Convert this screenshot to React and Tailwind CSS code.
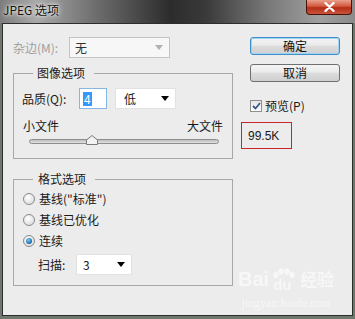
import React from 'react';

const font = { fontFamily: '"Noto Sans CJK SC", "Noto Sans", sans-serif' };

const Arrow = ({ color = '#000' }) => (
  <svg width="8" height="5" viewBox="0 0 8 5">
    <path d="M0 0h8L4 5z" fill={color} />
  </svg>
);

const Radio = ({ checked }) => (
  <span className="w-[12px] h-[12px] rounded-full border border-[#8a8a8a] bg-[radial-gradient(circle_at_40%_35%,#ffffff,#d4d4d4)] flex items-center justify-center">
    {checked && (
      <span className="w-[6px] h-[6px] rounded-full bg-[radial-gradient(circle_at_40%_35%,#7fd0f5,#1466a8_70%,#0b3d6b)]" />
    )}
  </span>
);

const Button = ({ children, focused }) => (
  <div
    className={`w-[90px] h-[18px] rounded-[3px] border flex items-center justify-center text-[12px] leading-none text-[#111] bg-[linear-gradient(#f4f4f4_0%,#ebebeb_45%,#dddddd_50%,#cfcfcf_100%)] ${
      focused ? 'border-[#3c8fc8] shadow-[inset_0_0_0_1px_#9fd3f3]' : 'border-[#707070]'
    }`}
  >
    {children}
  </div>
);

export default function App() {
  return (
    <div className="w-[355px] h-[319px] bg-[#6e786c] overflow-hidden relative" style={font}>
      {/* title bar */}
      <div className="h-[23px] flex items-start bg-[linear-gradient(90deg,#7c7c7c_0%,#a8a8a8_10%,#6a6a6a_28%,#2c2c2c_48%,#3a3a3a_58%,#777_75%,#a0a0a0_90%,#8a8a8a_100%)]">
        <div className="pl-[3px] pt-[2px] text-[12px] leading-[16px] text-[#111] [text-shadow:0_0_6px_#ffffff,0_0_3px_#ffffff]">
          JPEG 选项
        </div>
        <div className="ml-auto mr-[3px] w-[46px] h-[15px] rounded-b-[4px] border border-t-0 border-[#4a1208] bg-[linear-gradient(#e9a08c_0%,#d2583f_45%,#b52d16_55%,#c8553c_100%)] flex items-center justify-center">
          <svg width="11" height="10" viewBox="0 0 11 10">
            <path d="M1.5 1l8 8M9.5 1l-8 8" stroke="#fff" strokeWidth="2.4" strokeLinecap="round" />
          </svg>
        </div>
      </div>

      {/* client area */}
      <div className="mx-[2px] w-[351px] h-[293px] bg-[#ececec] border border-[#2d2d2d] flex text-[12px] leading-[16px] text-[#1a1a1a]">
        {/* left column */}
        <div className="w-[230px] pl-[10px] flex flex-col">
          <div className="mt-[13px] h-[21px] flex items-center">
            <span className="w-[56px] text-[#a0a0a0]">杂边(M):</span>
            <div className="w-[101px] h-[21px] border border-[#c4c4c4] bg-[#f7f7f7] flex items-center pl-[5px] pr-[6px]">
              <span className="text-[#333]">无</span>
              <span className="ml-auto"><Arrow color="#b0b0b0" /></span>
            </div>
          </div>

          <fieldset className="mt-[7px] w-[220px] border border-[#a8a8a8] pb-[14px]">
            <legend className="ml-[19px] pl-[4px] pr-[9px] text-[12px] leading-[16px]">图像选项</legend>
            <div className="mt-[7px] h-[21px] flex items-center pl-[8px]">
              <span className="w-[57px]">品质(Q):</span>
              <div className="w-[28px] h-[21px] border border-[#86b6e4] bg-white flex items-center pl-[3px]">
                <span className="bg-[#3399ff] text-white px-[1px] leading-[14px]">4</span>
              </div>
              <div className="ml-[8px] w-[61px] h-[21px] border border-[#e2e2e2] bg-white flex items-center pl-[8px] pr-[6px]">
                <span>低</span>
                <span className="ml-auto"><Arrow /></span>
              </div>
            </div>
            <div className="mt-[9px] flex pl-[9px] pr-[9px]">
              <span>小文件</span>
              <span className="ml-auto">大文件</span>
            </div>
            <div className="mt-[5px] ml-[15px] w-[190px] h-[5px] rounded-full border border-[#8e8e8e] bg-[linear-gradient(#bdbdbd,#e2e2e2)] relative">
              <svg className="absolute left-[56px] top-[-5px]" width="12" height="10" viewBox="0 0 12 10">
                <path d="M0.5 9.5V5L6 0.5L11.5 5V9.5Z" fill="#f2f2f2" stroke="#7a7a7a" />
              </svg>
            </div>
          </fieldset>

          <fieldset className="mt-[12px] w-[220px] border border-[#a8a8a8] pb-[10px]">
            <legend className="ml-[19px] pl-[5px] pr-[9px] text-[12px] leading-[16px]">格式选项</legend>
            <div className="mt-[1px] h-[21px] flex items-center pl-[9px] gap-[4px]">
              <Radio />
              <span>基线("标准")</span>
            </div>
            <div className="h-[21px] flex items-center pl-[9px] gap-[4px]">
              <Radio />
              <span>基线已优化</span>
            </div>
            <div className="h-[21px] flex items-center pl-[9px] gap-[4px]">
              <Radio checked />
              <span>连续</span>
            </div>
            <div className="mt-[3px] h-[21px] flex items-center pl-[24px]">
              <span className="w-[38px]">扫描:</span>
              <div className="w-[56px] h-[21px] border border-[#e2e2e2] bg-white flex items-center pl-[6px] pr-[6px]">
                <span>3</span>
                <span className="ml-auto"><Arrow /></span>
              </div>
            </div>
          </fieldset>
        </div>

        {/* right column */}
        <div className="flex flex-col">
          <div className="mt-[13px] ml-[17px]"><Button focused>确定</Button></div>
          <div className="mt-[9px] ml-[17px]"><Button>取消</Button></div>
          <div className="mt-[17px] ml-[17px] h-[13px] flex items-center gap-[3px]">
            <span className="w-[12px] h-[12px] border border-[#8e8f8f] bg-[linear-gradient(#e6e6e6,#ffffff)] flex items-center justify-center">
              <svg width="9" height="8" viewBox="0 0 9 8">
                <path d="M1 4l2.5 2.5L8 1" stroke="#3b5688" strokeWidth="1.8" fill="none" />
              </svg>
            </span>
            <span className="text-[12px]">预览(P)</span>
          </div>
          <div className="mt-[10px] ml-[8px] w-[51px] h-[27px] border border-[#c8262b] flex items-center pl-[6px] text-[12px]" style={{ fontFamily: '"Liberation Sans", sans-serif' }}>
            99.5K
          </div>
        </div>
      </div>

      {/* watermark */}
      <div className="absolute left-[238px] top-[268px] flex flex-col items-center text-white/60 pointer-events-none">
        <div className="flex items-center font-bold text-[20px] leading-[22px]" style={{ fontFamily: '"Liberation Sans", sans-serif' }}>
          <span>Bai</span>
          <span className="relative mx-[1px] w-[26px] h-[22px]">
            <svg className="absolute inset-0" width="26" height="22" viewBox="0 0 26 22">
              <g fill="rgba(255,255,255,0.6)">
                <ellipse cx="6" cy="7" rx="2.6" ry="3.2" />
                <ellipse cx="11" cy="3.5" rx="2.6" ry="3.2" />
                <ellipse cx="17" cy="3.5" rx="2.6" ry="3.2" />
                <ellipse cx="22" cy="7" rx="2.6" ry="3.2" />
              </g>
            </svg>
            <span className="absolute left-[3px] top-[6px] text-[15px]">du</span>
          </span>
          <span className="text-[17px] ml-[3px]" style={font}>经验</span>
        </div>
        <div className="mt-[6px] text-[12px] leading-[14px]" style={{ fontFamily: '"Liberation Serif", serif' }}>jingyan.baidu.com</div>
      </div>
    </div>
  );
}
